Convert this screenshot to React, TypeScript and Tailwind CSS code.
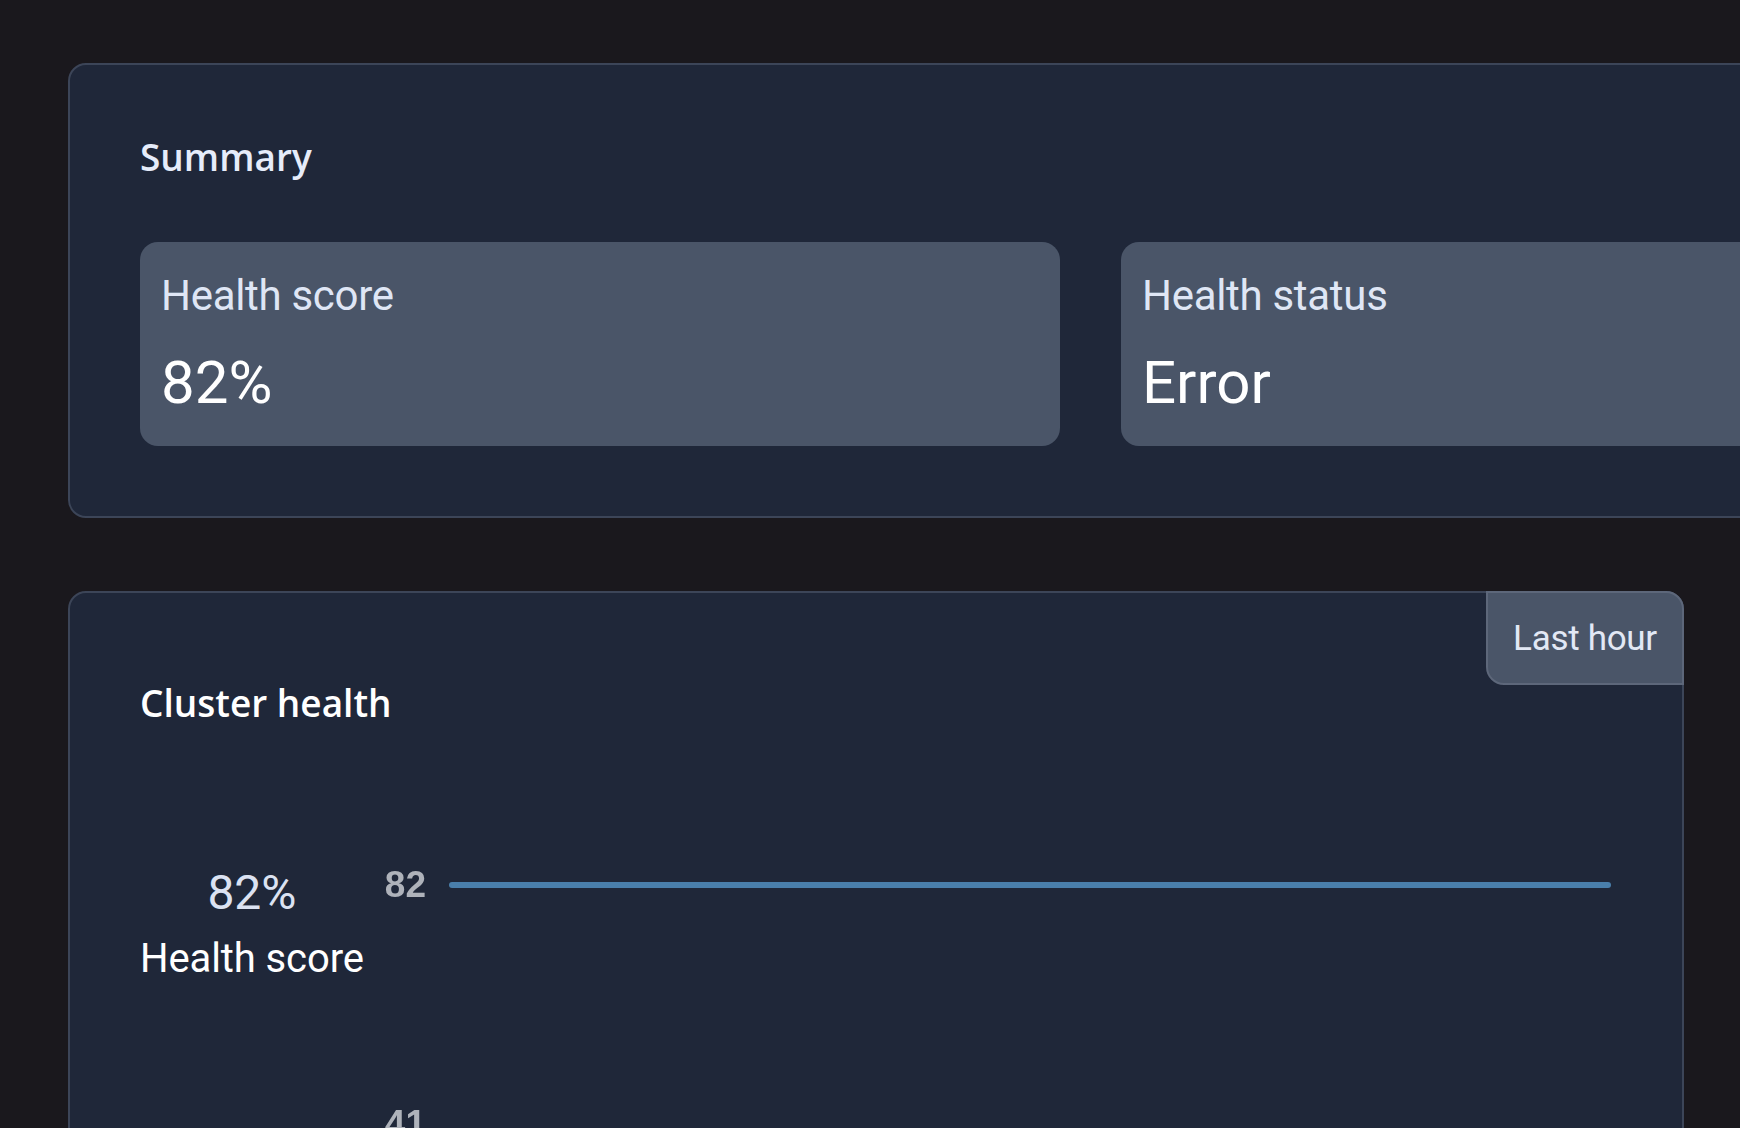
export default function App() {
  return (
    <div className="h-screen w-full overflow-hidden bg-[#1a181d] pl-[68px] pt-[63px]" style={{ fontFamily: 'Roboto, "Liberation Sans", sans-serif' }}>
      {/* Summary card */}
      <section className="w-max rounded-[18px] border-2 border-[#3c4558] bg-[#1f2739] pl-[70px] pr-[70px] pt-[73px] pb-[70px]">
        <h2 className="text-[37px] font-semibold leading-[37px] text-[#e6ecfa]" style={{ fontFamily: '"Open Sans", sans-serif' }}>
          Summary
        </h2>
        <div className="mt-[67px] flex gap-[61px]">
          <StatTile label="Health score" value="82%" />
          <StatTile label="Health status" value="Error" />
        </div>
      </section>

      {/* Cluster health card */}
      <section className="relative mt-[73px] h-[700px] w-[1616px] rounded-[18px] border-2 border-[#3c4558] bg-[#1f2739] pl-[70px] pt-[91px]">
        <button className="absolute -right-[2px] -top-[2px] flex h-[94px] w-[198px] items-center justify-center rounded-tr-[18px] rounded-bl-[18px] border-2 border-[#5d677a] bg-[#4a5568] text-[35px] leading-[35px] tracking-[-0.3px] text-[#e2e8f5]">
          Last hour
        </button>
        <h2 className="text-[37px] font-semibold leading-[37px] text-white" style={{ fontFamily: '"Open Sans", sans-serif' }}>
          Cluster health
        </h2>

        <div className="mt-[148px] flex items-start">
          <div className="flex flex-col items-center">
            <div className="text-[48px] leading-[48px] text-[#dbe2f2]">82%</div>
            <div className="mt-[22px] text-[40px] leading-[40px] tracking-[-0.1px] text-white">Health score</div>
          </div>

          <div className="ml-[21px] mt-[-3px] h-[400px] flex-1 pr-[71px]">
            <div className="flex items-center gap-[22px]">
              <span className="w-[42px] text-[37px] font-bold leading-[37px] text-[#aeb2ba] [filter:blur(0.4px)]" style={{ fontFamily: '"Liberation Sans", Arial, sans-serif' }}>
                82
              </span>
              <div className="h-[6px] flex-1 rounded-full bg-[#4a7fab]" />
            </div>
            <div className="mt-[202px] text-[37px] font-bold leading-[37px] text-[#aeb2ba] [filter:blur(0.4px)]" style={{ fontFamily: '"Liberation Sans", Arial, sans-serif' }}>
              41
            </div>
          </div>
        </div>
      </section>
    </div>
  );
}

function StatTile({ label, value }: { label: string; value: string }) {
  return (
    <div className="w-[920px] rounded-[18px] bg-[#4a5568] pl-[21px] pt-[33px] pb-[33px]">
      <div className="text-[42px] leading-[42px] tracking-[-0.3px] text-[#dfe6f5]">{label}</div>
      <div className="mt-[36px] text-[60px] leading-[60px] text-white">{value}</div>
    </div>
  );
}
